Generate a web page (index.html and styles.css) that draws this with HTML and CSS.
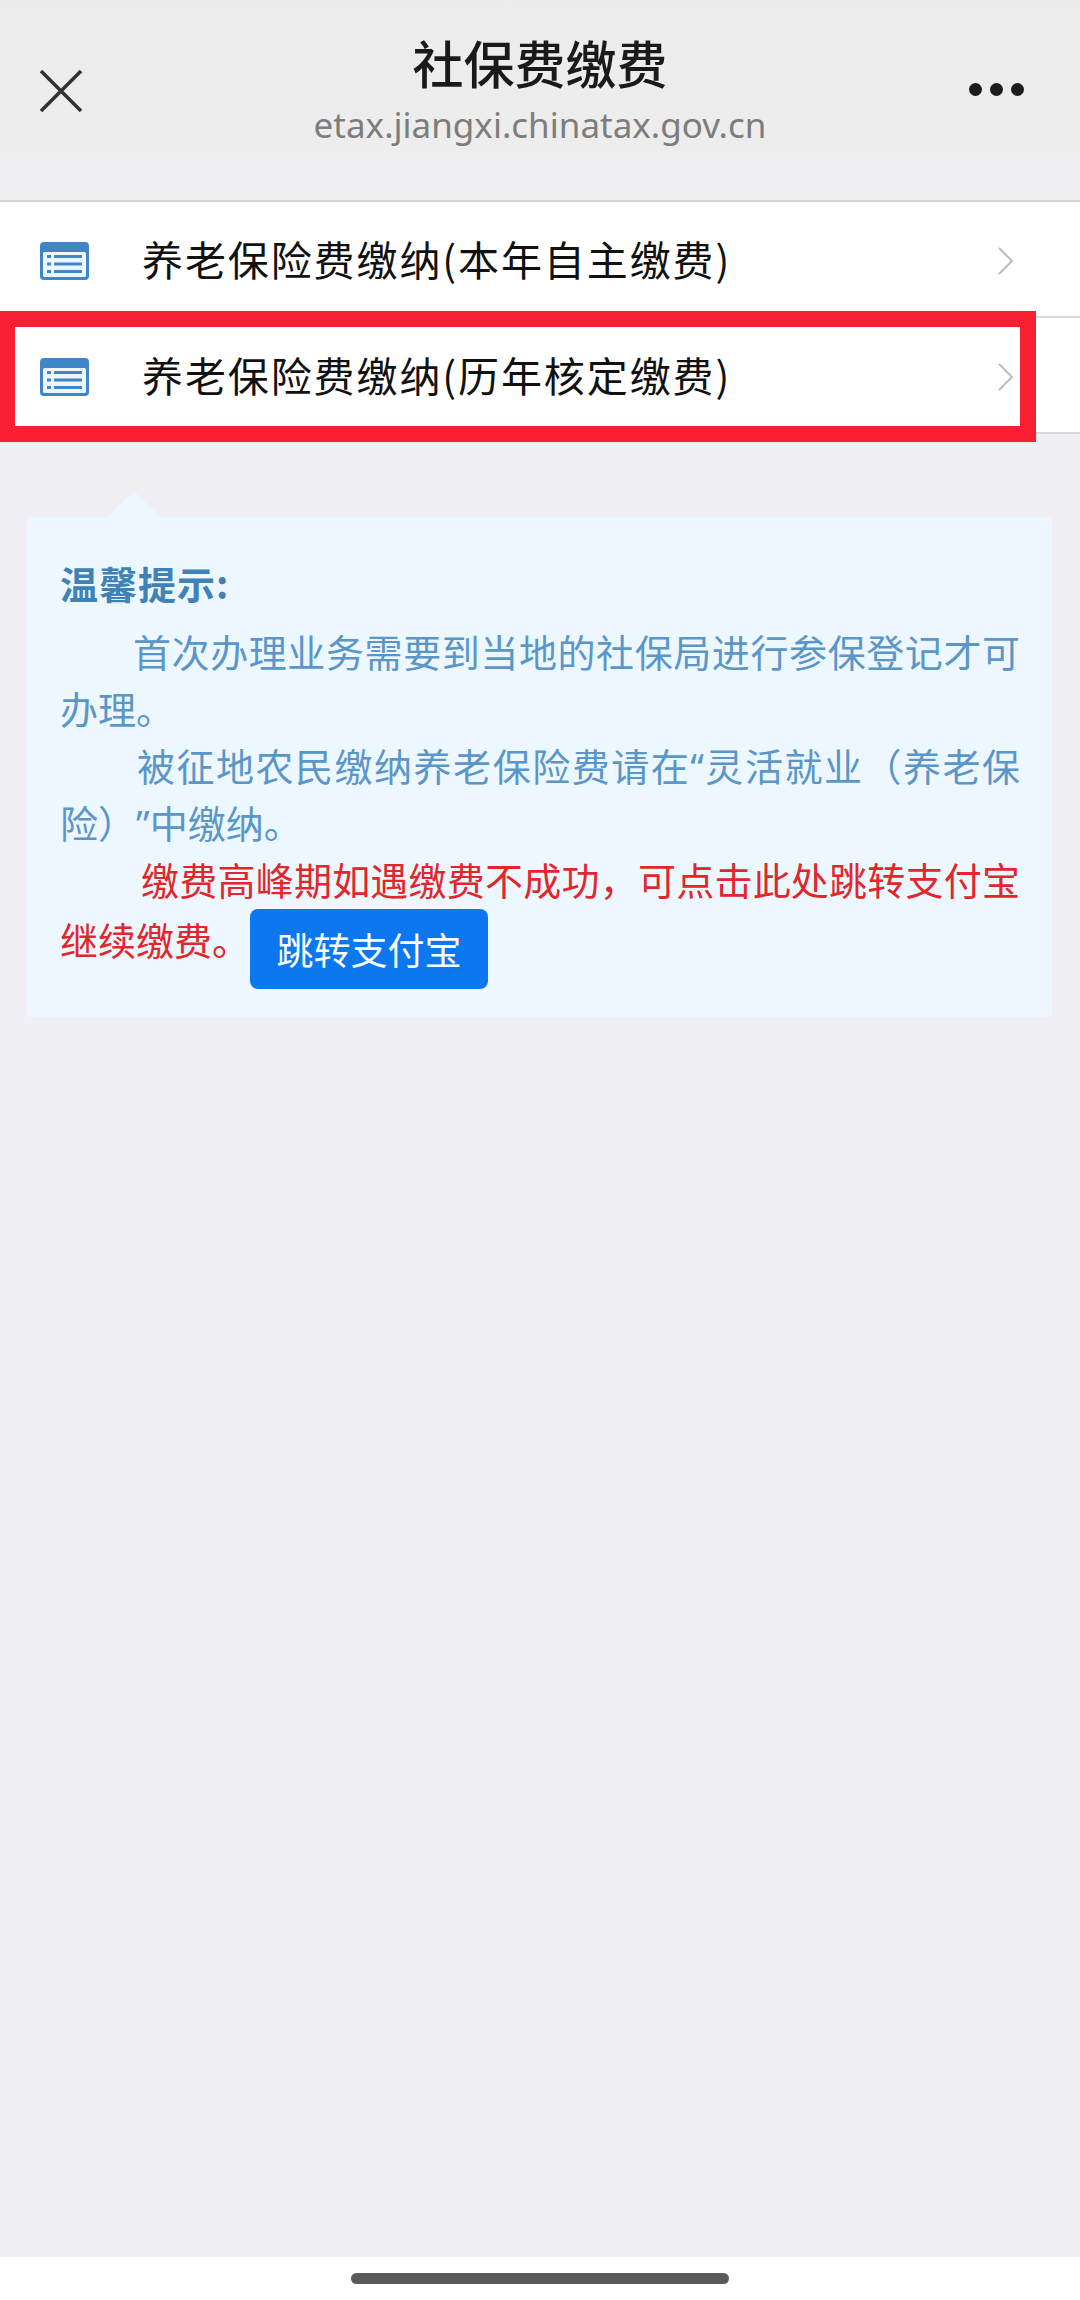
FILE: index.html
```html
<!DOCTYPE html>
<html lang="zh-CN">
<head>
    <meta charset="UTF-8">
    <meta name="viewport" content="width=device-width, initial-scale=1.0">
    <title>社保费缴费</title>
    <link rel="stylesheet" href="styles.css">
</head>
<body>

<header class="top-bar">
    <svg class="close-icon" viewBox="0 0 44 44" width="44" height="44">
        <path d="M2 2 L42 42 M42 2 L2 42" stroke="#333" stroke-width="3.6" fill="none"/>
    </svg>
    <div class="top-title">
        <h1>社保费缴费</h1>
        <p>etax.jiangxi.chinatax.gov.cn</p>
    </div>
    <div class="more-dots">
        <span></span><span></span><span></span>
    </div>
</header>

<main class="content">
    <ul class="menu">
        <li class="menu-row">
            <svg class="row-icon" viewBox="0 0 49 38" width="49" height="38">
                <rect width="49" height="38" rx="4" fill="#3f86c6"/>
                <rect x="3" y="10" width="43" height="25" rx="1.5" fill="#eef5fb"/>
                <path d="M14 14.5 H42 M14 22 H42 M14 29.5 H42" stroke="#3f86c6" stroke-width="3.2"/>
                <path d="M7 14.5 H11 M7 22 H11 M7 29.5 H11" stroke="#3f86c6" stroke-width="3.2"/>
            </svg>
            <span class="row-text">养老保险费缴纳(本年自主缴费)</span>
            <svg class="chevron" viewBox="0 0 16 28" width="16" height="28">
                <path d="M1 1 L14 14 L1 27" stroke="#bcbcbc" stroke-width="2" fill="none"/>
            </svg>
        </li>
        <li class="menu-row">
            <svg class="row-icon" viewBox="0 0 49 38" width="49" height="38">
                <rect width="49" height="38" rx="4" fill="#3f86c6"/>
                <rect x="3" y="10" width="43" height="25" rx="1.5" fill="#eef5fb"/>
                <path d="M14 14.5 H42 M14 22 H42 M14 29.5 H42" stroke="#3f86c6" stroke-width="3.2"/>
                <path d="M7 14.5 H11 M7 22 H11 M7 29.5 H11" stroke="#3f86c6" stroke-width="3.2"/>
            </svg>
            <span class="row-text">养老保险费缴纳(历年核定缴费)</span>
            <svg class="chevron" viewBox="0 0 16 28" width="16" height="28">
                <path d="M1 1 L14 14 L1 27" stroke="#bcbcbc" stroke-width="2" fill="none"/>
            </svg>
        </li>
    </ul>
    <div class="red-mark"></div>

    <section class="notice">
        <h3>温馨提示:</h3>
        <p class="line-a">首次办理业务需要到当地的社保局进行参保登记才可<span class="keep">办理。</span></p>
        <p class="line-b">被征地农民缴纳养老保险费请在<span class="quote">“</span>灵活就业（养老保险）<span class="quote">”</span>中缴纳。</p>
        <p class="line-c warn">缴费高峰期如遇缴费不成功，可点击此处跳转支付宝继续缴费。<button type="button">跳转支付宝</button></p>
    </section>
</main>

<footer class="home-bar">
    <div class="home-indicator"></div>
</footer>

</body>
</html>
```

FILE: styles.css
```css
* {
    box-sizing: border-box;
}

body {
    font-family: "Noto Sans CJK SC", "Noto Sans", sans-serif;
    background-color: #efeff4;
    margin: 0;
    height: 2300px;
    display: flex;
    flex-direction: column;
    overflow: hidden;
}

.top-bar {
    height: 202px;
    flex: none;
    display: grid;
    grid-template-columns: 1fr auto 1fr;
    align-items: start;
    padding: 0 39px;
    background: linear-gradient(#ececed, #ededee 70%, #f0f0f3);
    border-bottom: 2px solid #d4d4d8;
}

.close-icon {
    margin-top: 69px;
}

.top-title {
    margin-top: 32px;
    text-align: center;
}

.top-title h1 {
    margin: 0;
    font-size: 51px;
    line-height: 60px;
    font-weight: 500;
    color: #1a1a1a;
}

.top-title p {
    margin: 10px 0 0;
    font-family: "Noto Sans", sans-serif;
    font-size: 35px;
    line-height: 46px;
    color: #7d7d7d;
}

.more-dots {
    display: flex;
    justify-self: end;
    gap: 8px;
    margin: 83px 17px 0 0;
}

.more-dots span {
    width: 13px;
    height: 13px;
    border-radius: 50%;
    background-color: #1c1c1c;
}

.content {
    flex: 1;
    position: relative;
}

.menu {
    list-style: none;
    margin: 0;
    padding: 0;
    background-color: #fff;
}

.menu-row {
    height: 116px;
    display: flex;
    align-items: center;
    padding: 3px 66px 0 40px;
    border-bottom: 2px solid #d9d9dc;
}

.row-icon {
    flex: none;
    margin-right: 53px;
}

.row-text {
    flex: 1;
    font-size: 41px;
    letter-spacing: 1.9px;
    color: #111;
    position: relative;
    top: -3px;
}

.red-mark {
    position: absolute;
    left: 0;
    top: 109px;
    width: 1036px;
    height: 131px;
    border: 16px solid #f91f32;
    border-left-width: 15px;
}

.notice {
    position: relative;
    margin: 83px 28px 0 27px;
    padding: 37px 32px 28px 33px;
    background-color: #edf7ff;
    border-radius: 4px;
    font-size: 38px;
    line-height: 57px;
    color: #5b96c9;
    text-spacing-trim: space-all;
}

/* little arrow above the box */
.notice::before {
    content: "";
    position: absolute;
    left: 80px;
    top: -26px;
    border-left: 27px solid transparent;
    border-right: 27px solid transparent;
    border-bottom: 26px solid #edf7ff;
}

.notice h3 {
    margin: 0 0 11px;
    font-size: 38px;
    letter-spacing: 1px;
    line-height: 57px;
    font-weight: 700;
    color: #3f82b8;
}

.notice p {
    margin: 0;
    text-align: justify;
}

.line-a {
    text-indent: 73px;
}

.line-b {
    text-indent: 77px;
}

.line-c {
    text-indent: 81px;
}

.keep {
    white-space: nowrap;
}

.quote {
    font-family: "Noto Sans", sans-serif;
    line-height: 0;
}

.warn {
    color: #e2262b;
}

.notice button {
    text-indent: 0;
    height: 80px;
    width: 238px;
    margin-top: 2px;
    padding: 0;
    vertical-align: -10px;
    background-color: #0d77f0;
    border: none;
    border-radius: 8px;
    color: #fff;
    font-family: inherit;
    font-size: 37px;
}

.home-bar {
    height: 43px;
    flex: none;
    background-color: #fff;
    display: flex;
    justify-content: center;
    padding-top: 16px;
}

.home-indicator {
    width: 378px;
    height: 11px;
    border-radius: 6px;
    background-color: #5a5a5a;
}
```
